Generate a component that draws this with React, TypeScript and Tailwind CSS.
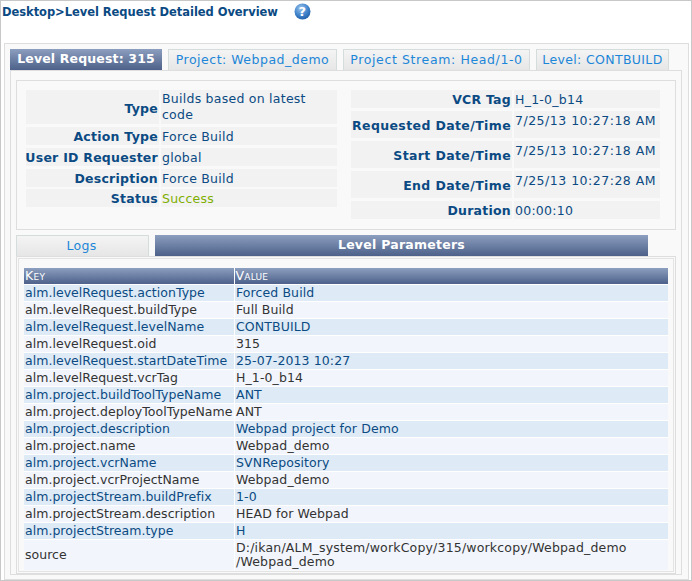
const font = "font-['DejaVu_Sans','Verdana',sans-serif]";

const leftRows = [
  { label: 'Type', value: 'Builds based on latest code', h: 'h-[34px]', tall: true },
  { label: 'Action Type', value: 'Force Build', h: 'h-[18px]' },
  { label: 'User ID Requester', value: 'global', h: 'h-[18px]' },
  { label: 'Description', value: 'Force Build', h: 'h-[18px]' },
  { label: 'Status', value: 'Success', h: 'h-[18px] -mt-[1px]', success: true },
];

const rightRows = [
  { label: 'VCR Tag', value: 'H_1-0_b14', h: 'h-[18px]' },
  { label: 'Requested Date/Time', value: '7/25/13 10:27:18 AM', h: 'h-[27px]', top: true },
  { label: 'Start Date/Time', value: '7/25/13 10:27:18 AM', h: 'h-[27px]', top: true },
  { label: 'End Date/Time', value: '7/25/13 10:27:28 AM', h: 'h-[27px]', top: true },
  { label: 'Duration', value: '00:00:10', h: 'h-[18px]' },
];

const params = [
  ['alm.levelRequest.actionType', 'Forced Build'],
  ['alm.levelRequest.buildType', 'Full Build'],
  ['alm.levelRequest.levelName', 'CONTBUILD'],
  ['alm.levelRequest.oid', '315'],
  ['alm.levelRequest.startDateTime', '25-07-2013 10:27'],
  ['alm.levelRequest.vcrTag', 'H_1-0_b14'],
  ['alm.project.buildToolTypeName', 'ANT'],
  ['alm.project.deployToolTypeName', 'ANT'],
  ['alm.project.description', 'Webpad project for Demo'],
  ['alm.project.name', 'Webpad_demo'],
  ['alm.project.vcrName', 'SVNRepository'],
  ['alm.project.vcrProjectName', 'Webpad_demo'],
  ['alm.projectStream.buildPrefix', '1-0'],
  ['alm.projectStream.description', 'HEAD for Webpad'],
  ['alm.projectStream.type', 'H'],
];

const HelpIcon = () => (
  <svg width="17" height="17" viewBox="0 0 17 17">
    <defs>
      <radialGradient id="help" cx="40%" cy="30%" r="75%">
        <stop offset="0%" stopColor="#9cc4ec" />
        <stop offset="60%" stopColor="#3f83cb" />
        <stop offset="100%" stopColor="#1f5da6" />
      </radialGradient>
    </defs>
    <circle cx="8.5" cy="8.5" r="8" fill="url(#help)" />
    <text x="8.5" y="13" textAnchor="middle" fontSize="13" fontWeight="bold" fill="#fff" fontFamily="DejaVu Sans">?</text>
  </svg>
);

const DetailRow = ({ row, labelW }: { row: any; labelW: string }) => (
  <div className={`flex gap-[2px] ${row.h}`}>
    <div
      className={`${labelW} shrink-0 bg-[#f2f2f2] flex items-center justify-end pr-[1px] font-bold text-[12.5px] text-[#0b4a83] whitespace-nowrap ${
        row.top ? 'pt-[3px] tracking-[0.38px]' : row.tall ? 'pt-[4px]' : 'pt-[2px]'
      }`}
    >
      {row.label}
    </div>
    <div
      className={`flex-1 bg-[#f2f2f2] pl-[1px] text-[12.5px] leading-[16px] flex ${
        row.top ? 'items-start pt-[2px] tracking-[0.5px]' : row.tall ? 'items-center' : 'items-center pt-[1px]'
      } ${row.success ? 'text-[#7fae00]' : 'text-[#0b4a83]'}`}
    >
      {row.value}
    </div>
  </div>
);

const Tab = ({ label, w, track }: { label: string; w: string; track: string }) => (
  <div className={`${w} ${track} h-[21px] border border-b-0 border-[#d4dcdc] bg-gradient-to-b from-[#f4f4f4] to-[#e6e6e6] flex items-center justify-center text-[12.5px] text-[#1c86d8] whitespace-nowrap`}>
    {label}
  </div>
);

export default function App() {
  return (
    <div className={`${font} w-[692px] h-[581px] bg-white border border-[#c8c8c8] overflow-hidden tracking-[0.25px]`}>
      <div className="h-[42px] flex items-start pl-[1px] pt-[2px]">
        <span className="font-bold text-[11.5px] tracking-[-0.05px] leading-[18px] text-[#0b4a83] whitespace-nowrap">Desktop&gt;Level Request Detailed Overview</span>
        <span className="ml-[16px]"><HelpIcon /></span>
      </div>

      <div className="ml-[3px] mr-[2px] h-[537px] border border-[#dedede] bg-[#f9f9f9] pl-[5px] pr-[5px] pt-[5px]">
        <div className="flex gap-[6px] h-[21px]">
          <div className="w-[152px] h-[21px] bg-gradient-to-b from-[#8d9fbf] to-[#4d618a] flex items-center justify-center font-bold text-[12.5px] text-white tracking-[0.15px]">
            Level Request: 315
          </div>
          <Tab label="Project: Webpad_demo" w="w-[169px]" track="tracking-[0.5px]" />
          <Tab label="Project Stream: Head/1-0" w="w-[187px]" track="tracking-[0.62px]" />
          <Tab label="Level: CONTBUILD" w="w-[133px]" track="tracking-[0.35px]" />
        </div>

        <div className="h-[505px] w-[672px] border border-[#dedede] px-[5px] pt-[9px]">
          <div className="w-[660px] h-[150px] border border-[#dedede] flex pl-[9px] pt-[9px]">
            <div className="w-[311px] flex flex-col gap-[3px]">
              {leftRows.map(row => <DetailRow key={row.label} row={row} labelW="w-[133px]" />)}
            </div>
            <div className="w-[309px] ml-[14px] flex flex-col gap-[3px]">
              {rightRows.map(row => <DetailRow key={row.label} row={row} labelW="w-[161px]" />)}
            </div>
          </div>

          <div className="flex mt-[5px] h-[21px]">
            <div className="w-[133px] h-[21px] border border-b-0 border-[#d4dcdc] bg-gradient-to-b from-[#f4f4f4] to-[#e6e6e6] flex items-center justify-center pr-[2px] text-[12.5px] text-[#1c86d8]">
              Logs
            </div>
            <div className="w-[493px] ml-[6px] h-[21px] bg-gradient-to-b from-[#8d9fbf] to-[#4d618a] flex items-center justify-center font-bold text-[12.5px] text-white">
              Level Parameters
            </div>
          </div>

          <div className="w-[660px] h-[318px] border border-[#dedede] p-[1px]">
            <div className="h-full border border-[#e4e4e4] px-[5px] pt-[9px]">
              <table className="w-[644px] table-fixed border-collapse text-[12.5px] text-[#333]">
                <thead>
                  <tr className="h-[16px]">
                    <th className="w-[210px] border-r border-white bg-gradient-to-b from-[#8d9fbf] to-[#4d618a] pl-[1px] text-left font-normal text-[12.5px] leading-[16px] text-white [font-variant:small-caps]">Key</th>
                    <th className="bg-gradient-to-b from-[#8d9fbf] to-[#4d618a] pl-[1px] text-left font-normal text-[12.5px] leading-[16px] text-white [font-variant:small-caps]">Value</th>
                  </tr>
                </thead>
                <tbody>
                  {params.map(([k, v], i) => (
                    <tr key={k} className={`h-[17px] border-t border-white ${i % 2 === 0 ? 'bg-[#deebf6] text-[#0b4a83]' : 'bg-[#f2f6fc]'}`}>
                      <td className="border-r border-white pl-[1px] leading-[16px] tracking-[0.03px] whitespace-nowrap">{k}</td>
                      <td className="pl-[1.5px] leading-[16px] tracking-[0.1px]">{v}</td>
                    </tr>
                  ))}
                  <tr className="h-[30px] border-t border-white bg-[#f2f6fc]">
                    <td className="border-r border-white pl-[1px] leading-[14px] tracking-[0.03px]">source</td>
                    <td className="pl-[1.5px] leading-[14px] tracking-[0.18px]">
                      D:/ikan/ALM_system/workCopy/315/workcopy/Webpad_demo
                      <br />
                      /Webpad_demo
                    </td>
                  </tr>
                </tbody>
              </table>
            </div>
          </div>
        </div>
      </div>
    </div>
  );
}
